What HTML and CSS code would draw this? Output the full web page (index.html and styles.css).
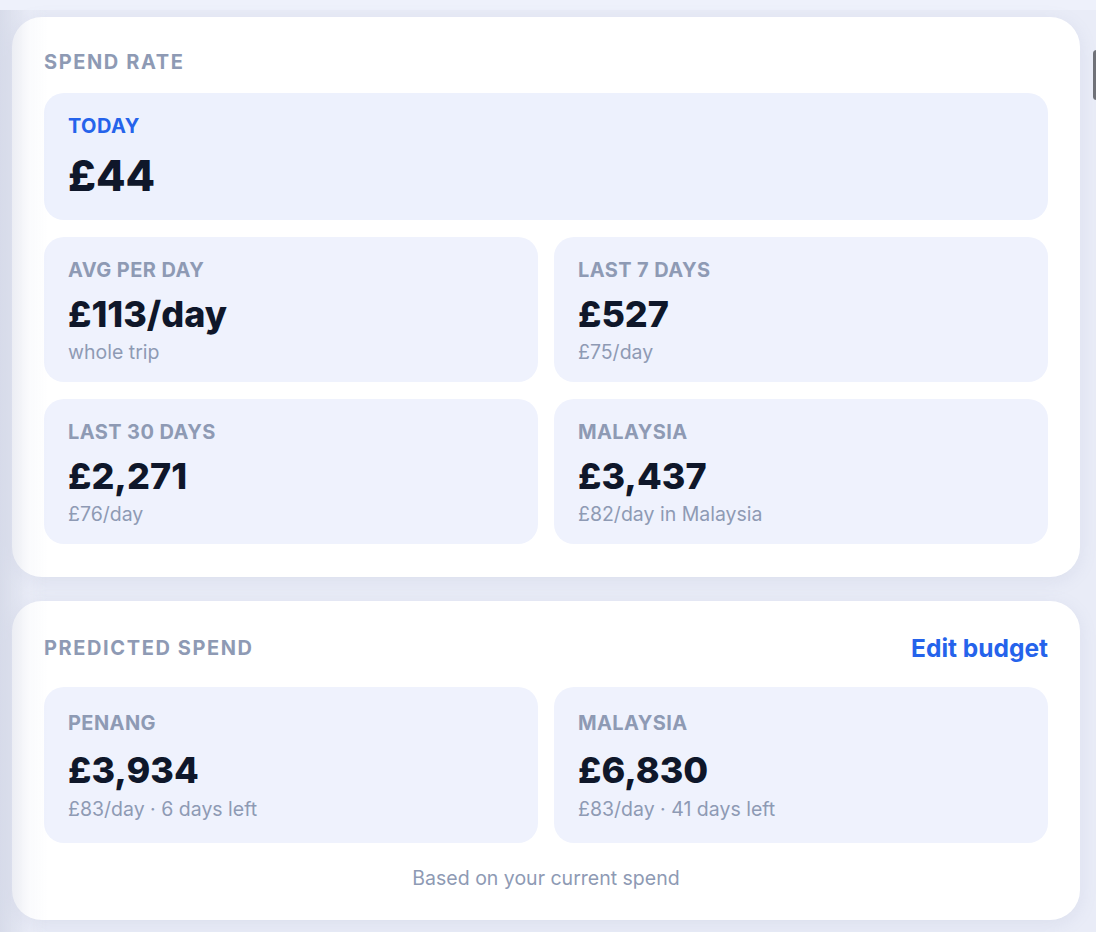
FILE: index.html
```html
<!DOCTYPE html>
<html lang="en">
<head>
<meta charset="utf-8">
<title>Spend</title>
<link rel="stylesheet" href="styles.css">
</head>
<body>
<div class="page">
  <section class="card card-rate">
    <div class="card-head">
      <h2 class="section-title">SPEND RATE</h2>
    </div>
    <div class="tile tile-today">
      <div class="tile-label blue">TODAY</div>
      <div class="tile-value big">£44</div>
    </div>
    <div class="grid">
      <div class="tile">
        <div class="tile-label">AVG PER DAY</div>
        <div class="tile-value">£113/day</div>
        <div class="tile-sub">whole trip</div>
      </div>
      <div class="tile">
        <div class="tile-label">LAST 7 DAYS</div>
        <div class="tile-value">£527</div>
        <div class="tile-sub">£75/day</div>
      </div>
      <div class="tile">
        <div class="tile-label">LAST 30 DAYS</div>
        <div class="tile-value">£2,271</div>
        <div class="tile-sub">£76/day</div>
      </div>
      <div class="tile">
        <div class="tile-label">MALAYSIA</div>
        <div class="tile-value">£3,437</div>
        <div class="tile-sub">£82/day in Malaysia</div>
      </div>
    </div>
  </section>

  <section class="card card-predicted">
    <div class="card-head">
      <h2 class="section-title">PREDICTED SPEND</h2>
      <a class="edit-link" href="#">Edit budget</a>
    </div>
    <div class="grid">
      <div class="tile tile-tall">
        <div class="tile-label">PENANG</div>
        <div class="tile-value">£3,934</div>
        <div class="tile-sub">£83/day · 6 days left</div>
      </div>
      <div class="tile tile-tall">
        <div class="tile-label">MALAYSIA</div>
        <div class="tile-value">£6,830</div>
        <div class="tile-sub">£83/day · 41 days left</div>
      </div>
    </div>
    <p class="footnote">Based on your current spend</p>
  </section>
</div>
<div class="edge-fade"></div>
<div class="scroll-thumb"></div>
</body>
</html>
```

FILE: styles.css
```css
* { box-sizing: border-box; }

html, body {
  margin: 0;
  padding: 0;
}

body {
  background: linear-gradient(#eef1fb 0, #eef1fb 10px, #e9ecf7 10px);
  font-family: "Inter", "Noto Sans", sans-serif;
  color: #0f172a;
  min-height: 932px;
  overflow: hidden;
}

.page {
  display: flex;
  flex-direction: column;
  gap: 24px;
  padding: 17px 16px 0 12px;
}

.card {
  background: #ffffff;
  border-radius: 30px;
  padding: 32px;
  box-shadow: 0 4px 18px rgba(120, 130, 170, 0.12);
  display: flex;
  flex-direction: column;
  gap: 17px;
}

.card-rate {
  padding-bottom: 33px;
}

.card-head {
  display: flex;
  justify-content: space-between;
  align-items: center;
  height: 26px;
  margin-bottom: 1px;
}

.card-predicted .card-head {
  height: 30px;
  margin-bottom: 7px;
}

.section-title {
  margin: 0;
  font-size: 20px;
  font-weight: 700;
  letter-spacing: 1.6px;
  color: #8e9ab4;
}

.edit-link {
  font-size: 24.5px;
  font-weight: 700;
  color: #2563eb;
  text-decoration: none;
  letter-spacing: 0;
}

.tile {
  background: #eff2fd;
  border-radius: 20px;
  padding: 21px 24px 18px;
  display: flex;
  flex-direction: column;
  height: 145px;
}

.tile-today {
  background: #edf1fd;
  height: 127px;
}

.tile-tall {
  padding-top: 24px;
  height: 156px;
}

.grid {
  display: grid;
  grid-template-columns: 1fr 1fr;
  column-gap: 16px;
  row-gap: 17px;
}

.tile-label {
  font-size: 20px;
  font-weight: 700;
  color: #8e9ab4;
  line-height: 24px;
  letter-spacing: 0.4px;
}

.tile-label.blue { color: #2563eb; }

.tile-value {
  font-size: 36px;
  font-weight: 800;
  line-height: 44px;
  margin-top: 10px;
  color: #0f172a;
}

.tile-tall .tile-value { margin-top: 13px; }

.tile-value.big {
  font-size: 43px;
  line-height: 52px;
  margin-top: 11px;
}

.tile-sub {
  font-size: 19.5px;
  color: #8e9ab4;
  line-height: 24px;
  margin-top: 4px;
}

.tile-tall .tile-sub { margin-top: 5px; }

.footnote {
  margin: 6px 0 -2px;
  text-align: center;
  font-size: 19.5px;
  color: #8e9ab4;
  line-height: 24px;
}

.edge-fade {
  position: fixed;
  left: 0;
  top: 10px;
  bottom: 0;
  width: 48px;
  background: linear-gradient(to right, rgba(200, 205, 222, 0.55), rgba(230, 233, 243, 0.2) 60%, rgba(255, 255, 255, 0));
  pointer-events: none;
}

.scroll-thumb {
  position: fixed;
  right: -4px;
  top: 50px;
  width: 7px;
  height: 50px;
  border-radius: 4px;
  background: #6f7178;
}
```
